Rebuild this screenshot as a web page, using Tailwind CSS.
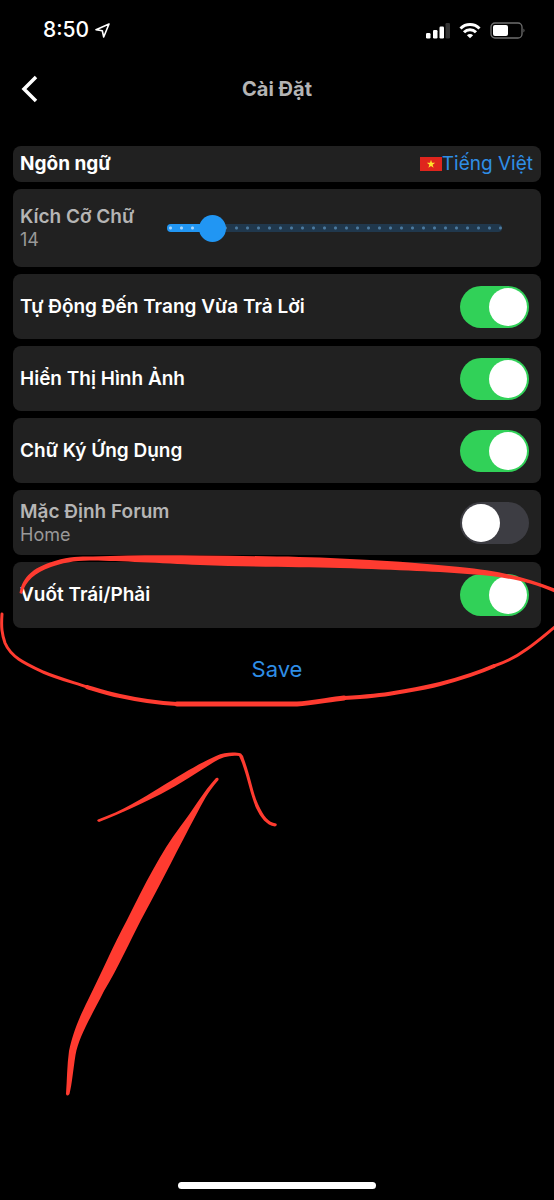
<!DOCTYPE html>
<html lang="vi">
<head>
<meta charset="utf-8">
<meta name="viewport" content="width=device-width, initial-scale=1">
<title>Cài Đặt</title>
<script src="https://cdn.jsdelivr.net/npm/@tailwindcss/browser@4"></script>
</head>
<body class="bg-black text-white font-['Inter','Noto_Sans',sans-serif]">
<div class="relative flex min-h-screen flex-col overflow-hidden">

  <!-- Status bar -->
  <div class="flex h-[60px] items-center justify-between pl-[43px] pr-[28px]">
    <div class="flex items-center gap-1.5">
      <span class="text-[21px] font-medium leading-6">8:50</span>
      <svg class="size-[15px]" viewBox="0 0 15 15" fill="none" stroke="#fff" stroke-width="1.6" stroke-linejoin="round"><path d="M14 1 1 6.7l6.3 1.1L8.7 14Z"/></svg>
    </div>
    <div class="flex items-center gap-[9px]">
      <svg class="h-[17px] w-[25px]" viewBox="0 0 25 17" fill="#fff"><rect x="1" y="11" width="4.5" height="5.5" rx="1.2"/><rect x="8" y="8" width="4.5" height="8.5" rx="1.2"/><rect x="14.5" y="4.500" width="4.500" height="12" rx="1.2"/><rect x="20.5" y="1" width="4.5" height="15.500" rx="1.2" fill="#333"/></svg>
      <svg class="h-[17px] w-[22px]" viewBox="0 0 22 17" fill="none" stroke="#fff" stroke-width="3"><path d="M1.500 6.500a13.500 13.500 0 0 1 19 0"/><path d="M5 10.300a8.500 8.500 0 0 1 12 0"/><path d="M11 16.300 7.900 13.300a4.400 4.400 0 0 1 6.200 0Z" fill="#fff" stroke="none"/></svg>
      <svg class="h-[17px] w-[36px]" viewBox="0 0 36 17"><rect x="1" y="1" width="31" height="15" rx="4" fill="none" stroke="#6d6d6d" stroke-width="1.300"/><rect x="3" y="3" width="15" height="11" rx="2" fill="#fff"/><path d="M33.500 6.500q2 2 0 4Z" fill="#777"/></svg>
    </div>
  </div>

  <!-- Title bar -->
  <header class="grid h-[58px] grid-cols-[60px_1fr_60px] items-center">
    <button type="button" aria-label="Quay lại" class="flex h-full items-center pl-[21px]">
      <svg class="h-[28px] w-[18px]" viewBox="0 0 18 28" fill="none" stroke="#fff" stroke-width="3.500"><path d="M15 2 3 14l12 12"/></svg>
    </button>
    <h1 class="text-center text-[20px] font-bold leading-6 text-[#b4b4b4]">Cài Đặt</h1>
  </header>

  <main class="mt-7 flex flex-col gap-[7px] px-[13px]">
    <section class="flex h-9 items-center justify-between rounded-lg bg-[#212121] pl-[7px] pr-2">
      <span class="text-[19px] font-bold leading-6">Ngôn ngữ</span>
      <button type="button" class="flex items-center text-[19px] leading-6 text-[#2f8ee6]">
        <svg class="h-[14px] w-[22px]" viewBox="0 0 22 14"><path fill="#df251d" d="M0 0h22v14H0z"/><path fill="#ffe52c" d="m11 2.800 1 3h3.200l-2.600 1.900 1 3.100L11 8.900l-2.600 1.900 1-3.100-2.600-1.900H10Z"/></svg>Tiếng Việt
      </button>
    </section>

    <section class="flex h-[78px] items-center rounded-lg bg-[#212121] pl-[7px] pr-[39px]">
      <label for="size" class="w-[147px] shrink-0 text-[#b5b5b5]">
        <span class="block text-[19px] font-semibold leading-6">Kích Cỡ Chữ</span>
        <span class="block text-[18px] leading-[22px] text-[#999]">14</span>
      </label>
      <div class="relative flex h-[27px] flex-1 items-center">
        <div class="h-2 w-full rounded-full bg-[#20384d] bg-[radial-gradient(circle,#4c7a9f_1px,transparent_2px)] bg-[length:11px_8px] bg-[position:-2px_0px]"></div>
        <div class="absolute left-0 h-2 w-[45px] rounded-full bg-[#2196f3] bg-[radial-gradient(circle,#a8d5fb_1px,transparent_2px)] bg-[length:11px_8px] bg-[position:-2px_0px]"></div>
        <input id="size" type="range" min="10" max="40" value="14" class="absolute -inset-x-3 h-[27px] appearance-none bg-transparent [&::-webkit-slider-thumb]:size-[27px] [&::-webkit-slider-thumb]:appearance-none [&::-webkit-slider-thumb]:rounded-full [&::-webkit-slider-thumb]:bg-[#2196f3]">
      </div>
    </section>

    <label class="flex h-[65px] items-center justify-between rounded-lg bg-[#212121] pl-[7px] pr-3">
      <span class="text-[19px] font-semibold leading-6">Tự Động Đến Trang Vừa Trả Lời</span>
      <input type="checkbox" role="switch" checked class="h-[42px] w-[69px] shrink-0 appearance-none rounded-full bg-[#3d3d43] p-0.5 before:block before:size-[38px] before:rounded-full before:bg-white checked:bg-[#31d158] checked:before:ml-[27px]">
    </label>

    <label class="flex h-[65px] items-center justify-between rounded-lg bg-[#212121] pl-[7px] pr-3">
      <span class="text-[19px] font-semibold leading-6">Hiển Thị Hình Ảnh</span>
      <input type="checkbox" role="switch" checked class="h-[42px] w-[69px] shrink-0 appearance-none rounded-full bg-[#3d3d43] p-0.5 before:block before:size-[38px] before:rounded-full before:bg-white checked:bg-[#31d158] checked:before:ml-[27px]">
    </label>

    <label class="flex h-[65px] items-center justify-between rounded-lg bg-[#212121] pl-[7px] pr-3">
      <span class="text-[19px] font-semibold leading-6">Chữ Ký Ứng Dụng</span>
      <input type="checkbox" role="switch" checked class="h-[42px] w-[69px] shrink-0 appearance-none rounded-full bg-[#3d3d43] p-0.5 before:block before:size-[38px] before:rounded-full before:bg-white checked:bg-[#31d158] checked:before:ml-[27px]">
    </label>

    <label class="flex h-[65px] items-center justify-between rounded-lg bg-[#212121] pl-[7px] pr-3">
      <span class="text-[#b5b5b5]">
        <span class="block text-[19px] font-semibold leading-6">Mặc Định Forum</span>
        <span class="block text-[18px] leading-[22px] text-[#999]">Home</span>
      </span>
      <input type="checkbox" role="switch" class="h-[42px] w-[69px] shrink-0 appearance-none rounded-full bg-[#3d3d43] p-0.5 before:block before:size-[38px] before:rounded-full before:bg-white checked:bg-[#31d158] checked:before:ml-[27px]">
    </label>

    <label class="flex h-[66px] items-center justify-between rounded-lg bg-[#212121] pl-[7px] pr-3">
      <span class="text-[19px] font-semibold leading-6">Vuốt Trái/Phải</span>
      <input type="checkbox" role="switch" checked class="h-[42px] w-[69px] shrink-0 appearance-none rounded-full bg-[#3d3d43] p-0.5 before:block before:size-[38px] before:rounded-full before:bg-white checked:bg-[#31d158] checked:before:ml-[27px]">
    </label>

    <button type="button" class="mt-[18px] self-center text-[22px] leading-8 text-[#2f8ee6]">Save</button>
  </main>

  <!-- Home indicator -->
  <div class="mt-auto mb-[11px] h-[7px] w-[198px] self-center rounded-full bg-white"></div>

  <!-- Hand-drawn markup over the screen -->
  <svg class="pointer-events-none absolute left-0 top-0 w-full" viewBox="0 0 554 1200" fill="#ff3b30" aria-hidden="true">
    <path d="M19.500 593C23 576 34 568 50 562.500C68 556 78 556.500 93 556.500C130 555 165 555 200 555.500C250 556 300 556.500 340 558.500C380 560 420 563 460 567C500 571 525 577 556 589V593C528 581 506 577 474 574.500C440 571.500 400 570 340 568C300 567 250 567 200 565C160 563 120 561 93 560.500C76 560 62 563 51 567C35 573 26 580 22 594Z"/>
    <g fill="none" stroke="#ff3b30" stroke-linecap="round" stroke-linejoin="round">
      <path stroke-width="3" d="M2 614C1 628 2 634 5 643C11 657 24 663 43 672C57 678 72 682 87 687"/>
      <path stroke-width="4" d="M87 687C100 691 109 694 120 696C138 700 157 703 177 704"/>
      <path stroke-width="5" d="M177 704H297C312 703 327 700 344 698"/>
      <path stroke-width="4" d="M344 698C361 697 378 696 394 693C411 690 425 688 440 684C459 679 478 673 494 666"/>
      <path stroke-width="3" d="M494 666C506 662 516 657 527 649C537 642 545 635 556 626"/>
    </g>
    <path d="M98 819.500C122 811 143 798 160 787.500C182 774 200 763 216 756C225 752 235 752 241 753.500Q243 755 244 759C251 778 253 793 258 804C264 817 268 822 276 823.500Q278 825 275 826.500C266 825 261 818 256 808C250 793 248 780 242 763Q240 758 239 756C230 755 222 757 214 762C198 772 180 784 161 794C142 803 123 813 99 822Q96 821 98 819.500Z"/>
    <path d="M216 778Q219 777 218.500 780C207 793 203 802 195 817C180 845 162 881 141 920C130 941 118 968 104 991C90 1019 79 1036 75.500 1055C73 1071 72 1084 69.500 1094Q67 1097 66 1094C67 1080 67 1065 69 1051C73 1033 78 1020 88 1000C102 972 113 946 127 920C145 884 161 852 180 827C194 809 203 792 216 778Z"/>
  </svg>
</div>
</body>
</html>
